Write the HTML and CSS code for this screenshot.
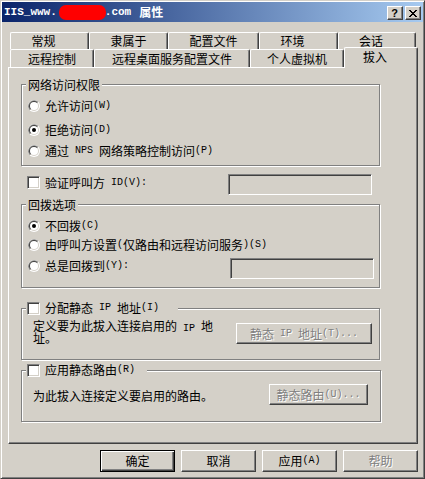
FILE: index.html
```html
<!DOCTYPE html>
<html lang="zh-CN">
<head>
<meta charset="utf-8">
<title>属性</title>
<link rel="stylesheet" href="styles.css">
</head>
<body>
<div class="window">
  <div class="titlebar">
    <div class="title"><span class="t-en">IIS_www.</span><span class="redact"></span><span class="t-en">.com</span><span class="t-cn">属性</span></div>
    <div class="tb-btns">
      <span class="tb-btn help">?</span>
      <span class="tb-btn close"><svg width="8" height="7" viewBox="0 0 8 7" shape-rendering="crispEdges"><path d="M0 0h2v1H0zM6 0h2v1H6zM1 1h2v1H1zM5 1h2v1H5zM2 2h4v1H2zM3 3h2v1H3zM2 4h4v1H2zM1 5h2v1H1zM5 5h2v1H5zM0 6h2v1H0zM6 6h2v1H6z" fill="#000"/></svg></span>
    </div>
  </div>
  <div class="client">
    <div class="tabs">
      <div class="tab-row row1">
        <div class="tab w79 two">常规</div>
        <div class="tab w79">隶属于</div>
        <div class="tab w91">配置文件</div>
        <div class="tab w79 two">环境</div>
        <div class="tab w78 two">会话</div>
      </div>
      <div class="tab-row row2">
        <div class="tab w84">远程控制</div>
        <div class="tab w156">远程桌面服务配置文件</div>
        <div class="tab w94">个人虚拟机</div>
        <div class="tab selected w74 two">拔入</div>
      </div>
    </div>
    <div class="panel">
      <div class="group g1">
        <div class="gtitle">网络访问权限</div>
        <div class="opt m6"><svg class="radio" width="12" height="12" viewBox="0 0 12 12"><circle cx="6" cy="6" r="6" fill="#fff"/><path d="M1.76 10.24A6 6 0 0 1 10.24 1.76Z" fill="#808080"/><circle cx="6" cy="6" r="5" fill="#D4D0C8"/><path d="M2.46 9.54A5 5 0 0 1 9.54 2.46Z" fill="#404040"/><circle cx="6" cy="6" r="4" fill="#fff"/></svg>允许访问<span class="en">(W)</span></div>
        <div class="opt m8"><svg class="radio" width="12" height="12" viewBox="0 0 12 12"><circle cx="6" cy="6" r="6" fill="#fff"/><path d="M1.76 10.24A6 6 0 0 1 10.24 1.76Z" fill="#808080"/><circle cx="6" cy="6" r="5" fill="#D4D0C8"/><path d="M2.46 9.54A5 5 0 0 1 9.54 2.46Z" fill="#404040"/><circle cx="6" cy="6" r="4" fill="#fff"/><circle cx="6" cy="6" r="2" fill="#000"/></svg>拒绝访问<span class="en">(D)</span></div>
        <div class="opt m5"><svg class="radio" width="12" height="12" viewBox="0 0 12 12"><circle cx="6" cy="6" r="6" fill="#fff"/><path d="M1.76 10.24A6 6 0 0 1 10.24 1.76Z" fill="#808080"/><circle cx="6" cy="6" r="5" fill="#D4D0C8"/><path d="M2.46 9.54A5 5 0 0 1 9.54 2.46Z" fill="#404040"/><circle cx="6" cy="6" r="4" fill="#fff"/></svg>通过<span class="en"> NPS </span>网络策略控制访问<span class="en">(P)</span></div>
      </div>

      <div class="chkrow">
        <div class="chklabel"><span class="chk"></span>验证呼叫方<span class="en"> ID(V):</span></div>
        <div class="field f1"></div>
      </div>

      <div class="group g2">
        <div class="gtitle">回拨选项</div>
        <div class="opt m6"><svg class="radio" width="12" height="12" viewBox="0 0 12 12"><circle cx="6" cy="6" r="6" fill="#fff"/><path d="M1.76 10.24A6 6 0 0 1 10.24 1.76Z" fill="#808080"/><circle cx="6" cy="6" r="5" fill="#D4D0C8"/><path d="M2.46 9.54A5 5 0 0 1 9.54 2.46Z" fill="#404040"/><circle cx="6" cy="6" r="4" fill="#fff"/><circle cx="6" cy="6" r="2" fill="#000"/></svg>不回拨<span class="en">(C)</span></div>
        <div class="opt m3"><svg class="radio" width="12" height="12" viewBox="0 0 12 12"><circle cx="6" cy="6" r="6" fill="#fff"/><path d="M1.76 10.24A6 6 0 0 1 10.24 1.76Z" fill="#808080"/><circle cx="6" cy="6" r="5" fill="#D4D0C8"/><path d="M2.46 9.54A5 5 0 0 1 9.54 2.46Z" fill="#404040"/><circle cx="6" cy="6" r="4" fill="#fff"/></svg>由呼叫方设置<span class="en">(</span>仅路由和远程访问服务<span class="en">)(S)</span></div>
        <div class="optrow m5">
          <div class="opt"><svg class="radio" width="12" height="12" viewBox="0 0 12 12"><circle cx="6" cy="6" r="6" fill="#fff"/><path d="M1.76 10.24A6 6 0 0 1 10.24 1.76Z" fill="#808080"/><circle cx="6" cy="6" r="5" fill="#D4D0C8"/><path d="M2.46 9.54A5 5 0 0 1 9.54 2.46Z" fill="#404040"/><circle cx="6" cy="6" r="4" fill="#fff"/></svg>总是回拨到<span class="en">(Y):</span></div>
          <div class="field f2"></div>
        </div>
      </div>

      <div class="group g3">
        <div class="ghead h3"><span class="chk"></span>分配静态<span class="en"> IP </span>地址<span class="en">(I)</span></div>
        <div class="gbody b3">
          <div class="desc"><span class="dl">定义要为此拔入连接启用的<span class="en"> IP </span>地</span><span class="dl">址。</span></div>
          <div class="btn disabled gb3">静态<span class="en"> IP </span>地址<span class="en">(T)...</span></div>
        </div>
      </div>

      <div class="group g4">
        <div class="ghead h4"><span class="chk"></span>应用静态路由<span class="en">(R)</span></div>
        <div class="gbody b4">
          <div class="desc d4">为此拔入连接定义要启用的路由。</div>
          <div class="btn disabled gb4">静态路由<span class="en">(U)...</span></div>
        </div>
      </div>
    </div>

    <div class="buttons">
      <div class="btn default">确定</div>
      <div class="btn">取消</div>
      <div class="btn">应用<span class="en">(A)</span></div>
      <div class="btn disabled">帮助</div>
    </div>
  </div>
</div>
</body>
</html>
```

FILE: styles.css
```css
* { box-sizing: border-box; }
html, body { margin: 0; padding: 0; }
body {
  background: #D4D0C8;
  font-family: "Noto Sans CJK SC", sans-serif;
  font-size: 12px;
  line-height: 14px;
  color: #000;
}
.en { font-family: "Liberation Mono", monospace; font-size: 10px; white-space: pre; }

.window {
  width: 425px;
  height: 479px;
  background: #D4D0C8;
  border: 1px solid;
  border-color: #D4D0C8 #404040 #404040 #D4D0C8;
  padding: 1px;
  box-shadow: inset 1px 1px #fff, inset -1px -1px #808080;
  display: flex;
  flex-direction: column;
}

.titlebar {
  height: 20px;
  background: linear-gradient(to right, #0A246A, #A6CAF0);
  display: flex;
  align-items: center;
  padding: 0 2px 0 2px;
  color: #fff;
}
.title { display: flex; align-items: center; white-space: nowrap; font-weight: bold; }
.t-en { font-family: "Liberation Mono", monospace; font-weight: bold; font-size: 11px; }
.redact {
  display: inline-block;
  width: 47px;
  height: 15px;
  background: #ff0000;
  border-radius: 7px;
  margin: 0 -1px 0 2px;
}
.t-cn { font-weight: bold; font-size: 12px; margin-left: 8px; }

.tb-btns { margin-left: auto; display: flex; gap: 2px; align-self: flex-start; margin-top: 4px; }
.tb-btn {
  width: 16px;
  height: 14px;
  background: #D4D0C8;
  border: 1px solid;
  border-color: #fff #404040 #404040 #fff;
  box-shadow: inset -1px -1px #808080;
  display: flex;
  align-items: center;
  justify-content: center;
  color: #000;
}
.help { font-family: "Liberation Sans", sans-serif; font-weight: bold; font-size: 11px; line-height: 12px; padding-right: 1px; }

.client { padding: 10px 0 0 6px; display: flex; flex-direction: column; }

.tab-row { display: flex; margin-left: 2px; }
.row1 { height: 17px; }
.row2 { height: 18px; }
.tab {
  height: 100%;
  border-top: 1px solid #fff;
  border-left: 1px solid #fff;
  border-right: 1px solid #404040;
  box-shadow: inset -1px 0 #808080;
  border-radius: 2px 2px 0 0;
  text-align: center;
  white-space: nowrap;
  background: #D4D0C8;
}
.row1 .tab { line-height: 16px; }
.row2 .tab { line-height: 17px; }
.tab.two { padding-right: 12px; }
.w74 { width: 74px; }
.w78 { width: 78px; }
.w79 { width: 79px; }
.w84 { width: 84px; }
.w91 { width: 91px; }
.w94 { width: 94px; }
.w156 { width: 156px; }
.row2 .tab.selected {
  position: relative;
  z-index: 1;
  height: 21px;
  margin-top: -2px;
  padding-bottom: 2px;
  line-height: 18px;
}

.panel {
  width: 410px;
  height: 377px;
  border-top: 1px solid #fff;
  border-left: 1px solid #fff;
  border-right: 1px solid #404040;
  border-bottom: 1px solid #404040;
  box-shadow: inset -1px -1px #808080;
  padding-left: 12px;
  display: flex;
  flex-direction: column;
}

.group {
  border: 1px solid #808080;
  box-shadow: inset 1px 1px #fff, 1px 1px #fff;
  display: flex;
  flex-direction: column;
  align-items: flex-start;
}
.g1 { width: 359px; height: 82px; margin-top: 16px; }
.g2 { width: 359px; height: 84px; margin-top: 9px; }
.g3 { width: 359px; height: 52px; margin-top: 20px; }
.g4 { width: 360px; height: 52px; margin-top: 10px; }

.gtitle {
  margin: -7px 0 0 4px;
  padding: 0 2px;
  height: 14px;
  line-height: 14px;
  background: #D4D0C8;
}
.ghead {
  display: flex;
  align-items: center;
  margin: -8px 0 0 4px;
  padding-left: 1px;
  height: 14px;
  background: #D4D0C8;
  white-space: nowrap;
}
.h3 { width: 152px; }
.h4 { width: 121px; }
.ghead .chk { margin-right: 5px; }

.opt {
  display: flex;
  align-items: center;
  height: 16px;
  line-height: 16px;
  padding-left: 6px;
  white-space: nowrap;
}
.radio { margin-right: 5px; flex: none; }
.m3 { margin-top: 3px; }
.m5 { margin-top: 5px; }
.m6 { margin-top: 6px; }
.m8 { margin-top: 8px; }
.optrow { display: flex; align-items: flex-start; align-self: stretch; }

.chk {
  display: inline-block;
  flex: none;
  width: 13px;
  height: 13px;
  background: #fff;
  border: 1px solid;
  border-color: #808080 #fff #fff #808080;
  box-shadow: inset 1px 1px #404040, inset -1px -1px #D4D0C8;
}
.field {
  height: 21px;
  width: 144px;
  margin-left: auto;
  background: #D4D0C8;
  border: 1px solid;
  border-color: #808080 #fff #fff #808080;
  box-shadow: inset 1px 1px #404040, inset -1px -1px #D4D0C8;
}
.f1 { margin-right: 8px; }
.f2 { margin-right: 5px; }

.chkrow { display: flex; align-items: flex-start; width: 359px; margin-top: 8px; }
.chklabel { display: flex; align-items: center; height: 13px; margin-top: 2px; padding-left: 6px; white-space: nowrap; line-height: 13px; }
.chklabel .chk { margin-right: 5px; }

.gbody { display: flex; align-items: flex-start; align-self: stretch; }
.b3 { margin-top: 5px; }
.b4 { margin-top: 7px; }
.desc { margin-left: 11px; width: 190px; line-height: 13px; }
.dl { display: block; white-space: nowrap; height: 12px; line-height: 12px; }
.d4 { margin-top: 5px; white-space: nowrap; }

.btn {
  width: 75px;
  height: 22px;
  border: 1px solid;
  border-color: #fff #404040 #404040 #fff;
  box-shadow: inset -1px -1px #808080;
  display: flex;
  align-items: center;
  justify-content: center;
  white-space: nowrap;
  line-height: 14px;
}
.btn.default {
  border-color: #000;
  box-shadow: inset 1px 1px #fff, inset -1px -1px #404040, inset -2px -2px #808080;
}
.btn.disabled { color: #808080; text-shadow: 1px 1px 0 #fff; }
.gb3 { width: 136px; height: 21px; margin-left: auto; margin-right: 7px; margin-top: 3px; }
.gb4 { width: 99px; height: 21px; margin-left: auto; margin-right: 12px; }

.buttons { display: flex; justify-content: flex-end; gap: 6px; width: 410px; margin-top: 6px; }
```
